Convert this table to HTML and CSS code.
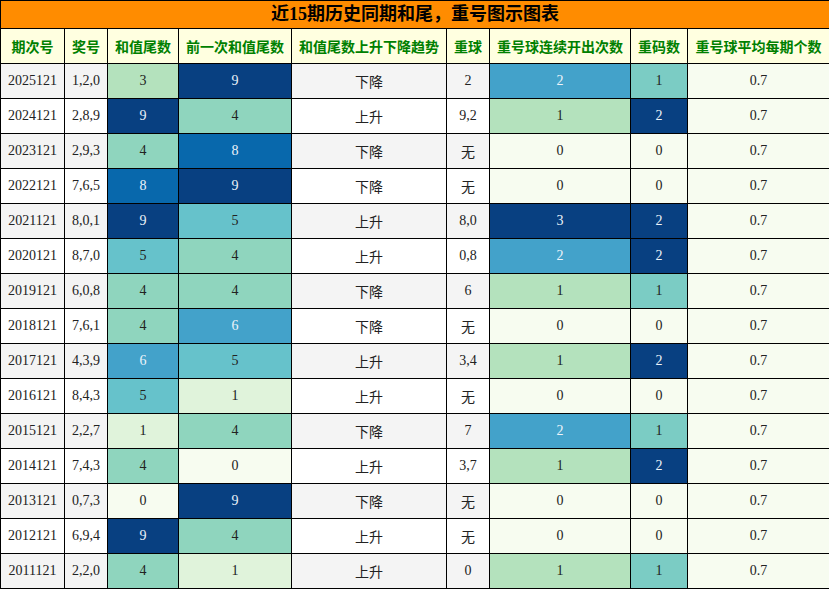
FILE: index.html
```html
<!DOCTYPE html>
<html lang="zh">
<head>
<meta charset="utf-8">
<link rel="stylesheet" href="styles.css">
</head>
<body>
<table class="chart">
<colgroup>
<col class="w1"><col class="w2"><col class="w3"><col class="w4"><col class="w5"><col class="w6"><col class="w7"><col class="w8"><col class="w9">
</colgroup>
<thead>
<tr class="title-row"><th colspan="9">近15期历史同期和尾，重号图示图表</th></tr>
<tr class="head-row"><th>期次号</th><th>奖号</th><th>和值尾数</th><th>前一次和值尾数</th><th>和值尾数上升下降趋势</th><th>重球</th><th>重号球连续开出次数</th><th>重码数</th><th>重号球平均每期个数</th></tr>
</thead>
<tbody>
<tr class="odd"><td>2025121</td><td>1,2,0</td><td class="g2">3</td><td class="g7">9</td><td class="cjk">下降</td><td>2</td><td class="g5">2</td><td class="g3b">1</td><td class="g0">0.7</td></tr>
<tr><td>2024121</td><td>2,8,9</td><td class="g7">9</td><td class="g3">4</td><td class="cjk">上升</td><td>9,2</td><td class="g2">1</td><td class="g7">2</td><td class="g0">0.7</td></tr>
<tr class="odd"><td>2023121</td><td>2,9,3</td><td class="g3">4</td><td class="g6">8</td><td class="cjk">下降</td><td class="cjk">无</td><td class="g0">0</td><td class="g0">0</td><td class="g0">0.7</td></tr>
<tr><td>2022121</td><td>7,6,5</td><td class="g6">8</td><td class="g7">9</td><td class="cjk">下降</td><td class="cjk">无</td><td class="g0">0</td><td class="g0">0</td><td class="g0">0.7</td></tr>
<tr class="odd"><td>2021121</td><td>8,0,1</td><td class="g7">9</td><td class="g4">5</td><td class="cjk">上升</td><td>8,0</td><td class="g7">3</td><td class="g7">2</td><td class="g0">0.7</td></tr>
<tr><td>2020121</td><td>8,7,0</td><td class="g4">5</td><td class="g3">4</td><td class="cjk">上升</td><td>0,8</td><td class="g5">2</td><td class="g7">2</td><td class="g0">0.7</td></tr>
<tr class="odd"><td>2019121</td><td>6,0,8</td><td class="g3">4</td><td class="g3">4</td><td class="cjk">下降</td><td>6</td><td class="g2">1</td><td class="g3b">1</td><td class="g0">0.7</td></tr>
<tr><td>2018121</td><td>7,6,1</td><td class="g3">4</td><td class="g5">6</td><td class="cjk">下降</td><td class="cjk">无</td><td class="g0">0</td><td class="g0">0</td><td class="g0">0.7</td></tr>
<tr class="odd"><td>2017121</td><td>4,3,9</td><td class="g5">6</td><td class="g4">5</td><td class="cjk">上升</td><td>3,4</td><td class="g2">1</td><td class="g7">2</td><td class="g0">0.7</td></tr>
<tr><td>2016121</td><td>8,4,3</td><td class="g4">5</td><td class="g1">1</td><td class="cjk">上升</td><td class="cjk">无</td><td class="g0">0</td><td class="g0">0</td><td class="g0">0.7</td></tr>
<tr class="odd"><td>2015121</td><td>2,2,7</td><td class="g1">1</td><td class="g3">4</td><td class="cjk">下降</td><td>7</td><td class="g5">2</td><td class="g3b">1</td><td class="g0">0.7</td></tr>
<tr><td>2014121</td><td>7,4,3</td><td class="g3">4</td><td class="g0">0</td><td class="cjk">上升</td><td>3,7</td><td class="g2">1</td><td class="g7">2</td><td class="g0">0.7</td></tr>
<tr class="odd"><td>2013121</td><td>0,7,3</td><td class="g0">0</td><td class="g7">9</td><td class="cjk">下降</td><td class="cjk">无</td><td class="g0">0</td><td class="g0">0</td><td class="g0">0.7</td></tr>
<tr><td>2012121</td><td>6,9,4</td><td class="g7">9</td><td class="g3">4</td><td class="cjk">上升</td><td class="cjk">无</td><td class="g0">0</td><td class="g0">0</td><td class="g0">0.7</td></tr>
<tr class="odd"><td>2011121</td><td>2,2,0</td><td class="g3">4</td><td class="g1">1</td><td class="cjk">上升</td><td>0</td><td class="g2">1</td><td class="g3b">1</td><td class="g0">0.7</td></tr>
</tbody>
</table>
</body>
</html>
```
FILE: styles.css
```css
html, body {
  margin: 0;
  padding: 0;
  background: #ffffff;
}
.chart {
  border-collapse: collapse;
  table-layout: fixed;
  width: 829px;
  font-family: "Liberation Serif", "Noto Sans CJK SC", serif;
  font-size: 14px;
  color: #222;
}
.w1 { width: 64px; }
.w2 { width: 43px; }
.w3 { width: 71px; }
.w4 { width: 113px; }
.w5 { width: 155px; }
.w6 { width: 43px; }
.w7 { width: 141px; }
.w8 { width: 57px; }
.w9 { width: 142px; }
.chart th, .chart td {
  border: 1px solid #000;
  padding: 0;
  text-align: center;
  vertical-align: middle;
  white-space: nowrap;
  overflow: hidden;
}
.title-row th {
  height: 27px;
  background: #ff8c00;
  color: #000;
  font-size: 18px;
  font-weight: bold;
  line-height: 27px;
}
.head-row th {
  height: 34px;
  background: #ffffe0;
  color: #008000;
  font-size: 14px;
  font-weight: bold;
  font-family: "Noto Sans CJK SC", sans-serif;
}
.chart td {
  height: 34px;
  background: #ffffff;
}
.chart tr.odd td {
  background: #f4f4f4;
}
.cjk {
  font-family: "Noto Sans CJK SC", sans-serif;
}
.chart tr td.g0 { background: #f7fcf0; }
.chart tr td.g1 { background: #e0f3db; }
.chart tr td.g2 { background: #b4e2bd; }
.chart tr td.g3 { background: #8fd5be; }
.chart tr td.g3b { background: #7bccc4; }
.chart tr td.g4 { background: #66c2cb; }
.chart tr td.g5 { background: #43a2ca; color: #eef4fa; }
.chart tr td.g6 { background: #0868ac; color: #eef4fa; }
.chart tr td.g7 { background: #084081; color: #eef4fa; }
```
